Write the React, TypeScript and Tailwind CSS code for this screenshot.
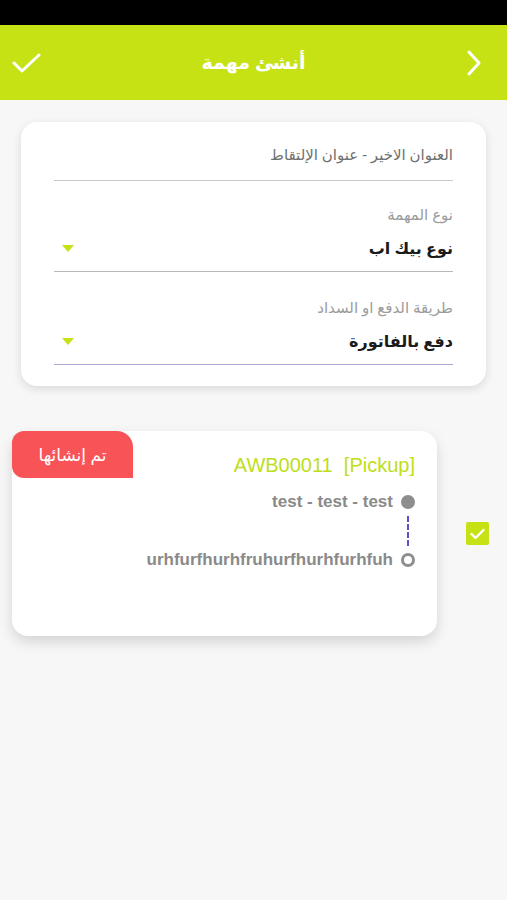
import React from "react";

const arabic = { fontFamily: '"Noto Sans", "DejaVu Sans", sans-serif' };
const latin = { fontFamily: '"Liberation Sans", Arial, sans-serif' };

function Caret() {
  return (
    <svg width="12" height="7" viewBox="0 0 12 7" className="shrink-0">
      <path d="M0 0 L12 0 L6 7 Z" fill="#c6e215" />
    </svg>
  );
}

function SelectField({ label, value, line, top }: { label: string; value: string; line: string; top: string }) {
  return (
    <div className={`${top} border-b ${line} pb-[13px]`}>
      <div className="text-[15px] leading-[20px] text-[#9b9b9b]">{label}</div>
      <div className="mt-[14px] flex items-center justify-between">
        <span className="text-[16px] leading-[20px] font-semibold text-[#1a1a1a]">{value}</span>
        <span className="ml-[8px]">
          <Caret />
        </span>
      </div>
    </div>
  );
}

export default function App() {
  return (
    <div className="min-h-[900px] w-full bg-[#f7f7f7]" style={arabic}>
      <div className="h-[25px] bg-black" />
      <header className="flex h-[75px] items-center justify-between bg-[#c6e215] pl-[12px] pr-[24px]">
        <svg width="30" height="22" viewBox="0 0 30 22" fill="none">
          <path d="M2 11 L10 19 L27 3" stroke="white" strokeWidth="3" strokeLinecap="round" strokeLinejoin="round" />
        </svg>
        <h1 className="text-[19px] font-bold text-white">أنشئ مهمة</h1>
        <svg width="18" height="28" viewBox="0 0 18 28" fill="none">
          <path d="M4 3 L14 14 L4 25" stroke="white" strokeWidth="3" strokeLinecap="round" strokeLinejoin="round" />
        </svg>
      </header>

      <div dir="rtl" className="mx-[21px] mt-[22px] rounded-[16px] bg-white px-[33px] pt-[22px] pb-[21px] shadow-[0_3px_10px_rgba(0,0,0,0.12)]">
        <div className="border-b border-[#c8c8c8] pb-[16px] text-[15px] leading-[20px] text-[#6f6f6f]">
          العنوان الاخير - عنوان الإلتقاط
        </div>
        <SelectField top="mt-[23px]" label="نوع المهمة" value="نوع بيك اب" line="border-[#b8b8b8]" />
        <SelectField top="mt-[25px]" label="طريقة الدفع او السداد" value="دفع بالفاتورة" line="border-[#a8a8d4]" />
      </div>

      <div className="mt-[45px] flex items-center">
        <div className="relative ml-[12px] h-[205px] w-[425px] rounded-[16px] bg-white shadow-[0_6px_14px_rgba(0,0,0,0.14)]">
          <div className="absolute left-0 top-0 flex h-[47px] w-[121px] items-center justify-center rounded-tl-[12px] rounded-tr-[16px] rounded-bl-[12px] bg-[#f85457] text-[17px] text-white">
            تم إنشائها
          </div>
          <div dir="rtl" className="pr-[22px] pt-[22px]" style={latin}>
            <div className="text-[20px] leading-[24px] text-[#bede1a]">
              <span dir="ltr">AWB00011&nbsp;&nbsp;[Pickup]</span>
            </div>
            <div className="mt-[15px] flex items-center gap-[8px]">
              <span className="h-[14px] w-[14px] rounded-full bg-[#8e8e8e]" />
              <span className="text-[17px] font-bold leading-[20px] text-[#8a8a8a]">test - test - test</span>
            </div>
            <div className="flex w-[14px] justify-center py-[4px]">
              <div className="h-[30px] border-l-2 border-dashed border-[#5b52c8]" />
            </div>
            <div className="flex items-center gap-[8px]">
              <span className="h-[14px] w-[14px] rounded-full border-[3px] border-[#8e8e8e]" />
              <span className="text-[17px] font-bold leading-[20px] text-[#8a8a8a]">urhfurfhurhfruhurfhurhfurhfuh</span>
            </div>
          </div>
        </div>
        <div className="ml-[29px] flex h-[23px] w-[23px] items-center justify-center rounded-[2px] bg-[#c6e215]">
          <svg width="15" height="12" viewBox="0 0 15 12" fill="none">
            <path d="M1.5 6 L5.5 10 L13.5 2" stroke="white" strokeWidth="2.4" strokeLinecap="round" strokeLinejoin="round" />
          </svg>
        </div>
      </div>
    </div>
  );
}
